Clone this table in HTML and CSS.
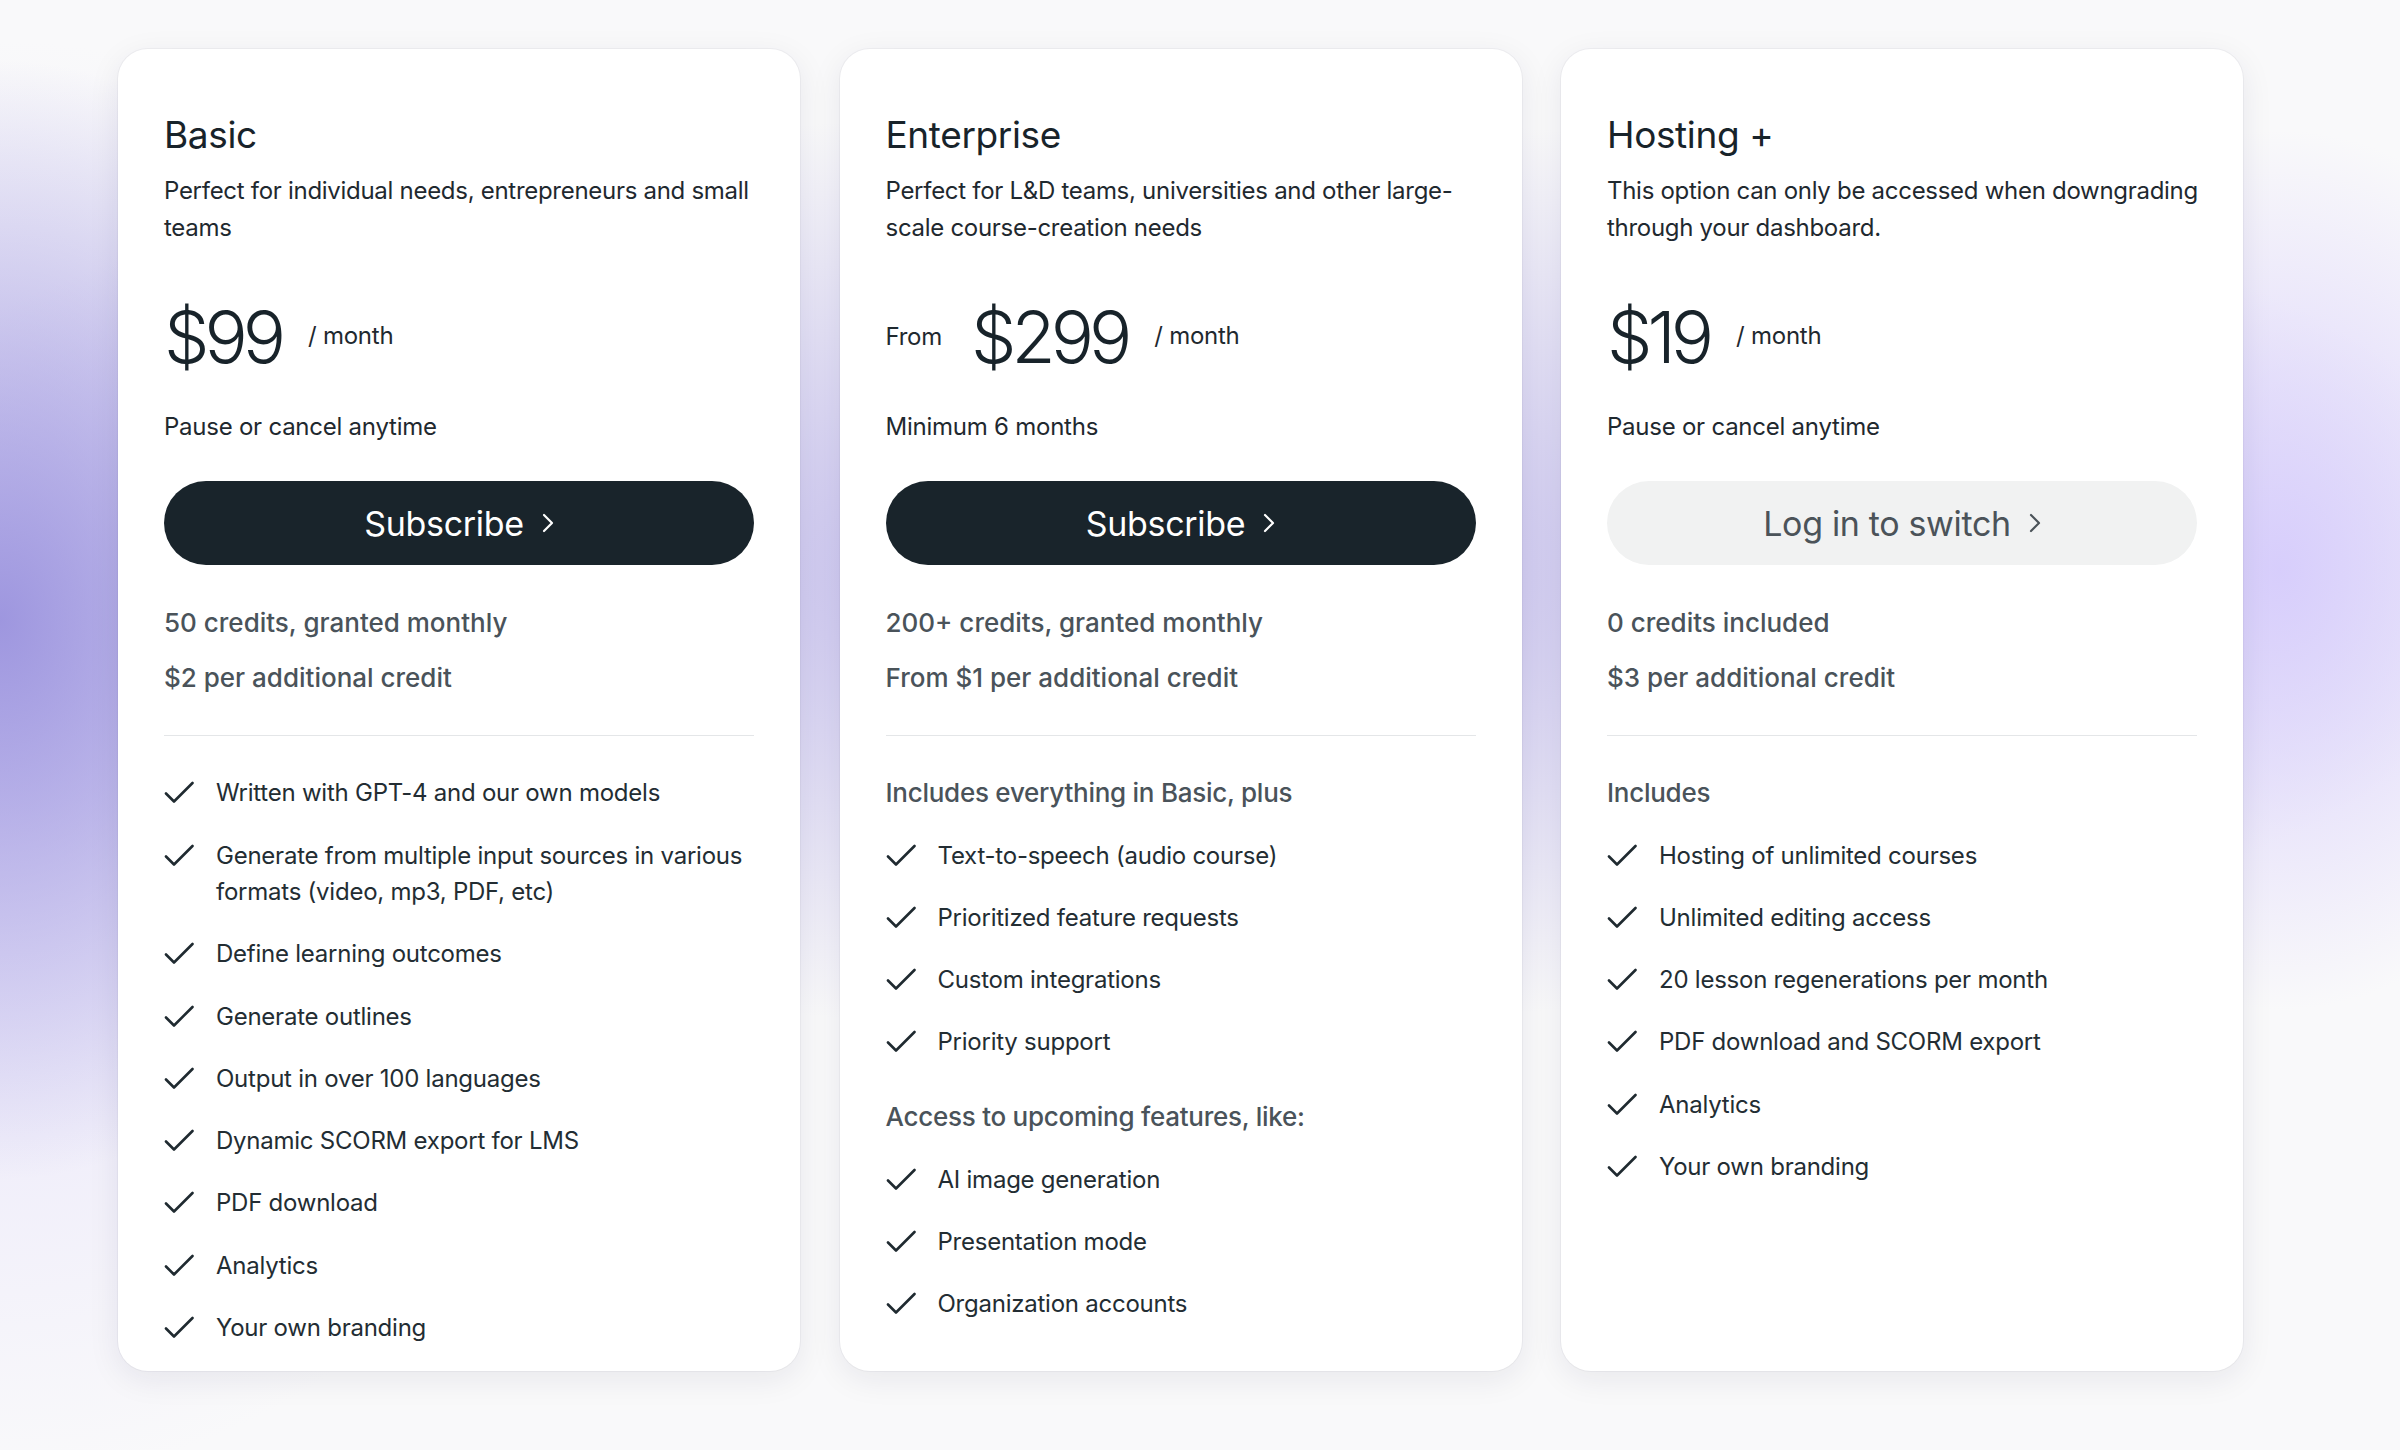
FILE: index.html
```html
<!DOCTYPE html>
<html lang="en">
<head>
<meta charset="utf-8">
<title>Pricing</title>
<link rel="stylesheet" href="styles.css">
</head>
<body>
<main class="plans">
  <section class="card">
    <h2 class="plan-name">Basic</h2>
    <p class="plan-desc">Perfect for individual needs, entrepreneurs and small teams</p>
    <div class="price-row"><span class="price">$99</span><span class="per">/ month</span></div>
    <p class="note">Pause or cancel anytime</p>
    <a class="btn btn-dark" href="#">Subscribe <svg class="chev" viewBox="0 0 12 20" aria-hidden="true"><path d="M2 2l8 8-8 8"/></svg></a>
    <div class="credits"><p>50 credits, granted monthly</p><p>$2 per additional credit</p></div>
    <hr class="divider">
    <ul class="features">
      <li><svg class="check" viewBox="0 0 30 30" aria-hidden="true"><path d="M2 15.5l8 8L28.5 5"/></svg><span>Written with GPT-4 and our own models</span></li>
      <li><svg class="check" viewBox="0 0 30 30" aria-hidden="true"><path d="M2 15.5l8 8L28.5 5"/></svg><span>Generate from multiple input sources in various formats (video, mp3, PDF, etc)</span></li>
      <li><svg class="check" viewBox="0 0 30 30" aria-hidden="true"><path d="M2 15.5l8 8L28.5 5"/></svg><span>Define learning outcomes</span></li>
      <li><svg class="check" viewBox="0 0 30 30" aria-hidden="true"><path d="M2 15.5l8 8L28.5 5"/></svg><span>Generate outlines</span></li>
      <li><svg class="check" viewBox="0 0 30 30" aria-hidden="true"><path d="M2 15.5l8 8L28.5 5"/></svg><span>Output in over 100 languages</span></li>
      <li><svg class="check" viewBox="0 0 30 30" aria-hidden="true"><path d="M2 15.5l8 8L28.5 5"/></svg><span>Dynamic SCORM export for LMS</span></li>
      <li><svg class="check" viewBox="0 0 30 30" aria-hidden="true"><path d="M2 15.5l8 8L28.5 5"/></svg><span>PDF download</span></li>
      <li><svg class="check" viewBox="0 0 30 30" aria-hidden="true"><path d="M2 15.5l8 8L28.5 5"/></svg><span>Analytics</span></li>
      <li><svg class="check" viewBox="0 0 30 30" aria-hidden="true"><path d="M2 15.5l8 8L28.5 5"/></svg><span>Your own branding</span></li>
    </ul>
  </section>

  <section class="card">
    <h2 class="plan-name">Enterprise</h2>
    <p class="plan-desc">Perfect for L&amp;D teams, universities and other large-scale course-creation needs</p>
    <div class="price-row"><span class="from">From</span><span class="price">$299</span><span class="per">/ month</span></div>
    <p class="note">Minimum 6 months</p>
    <a class="btn btn-dark" href="#">Subscribe <svg class="chev" viewBox="0 0 12 20" aria-hidden="true"><path d="M2 2l8 8-8 8"/></svg></a>
    <div class="credits"><p>200+ credits, granted monthly</p><p>From $1 per additional credit</p></div>
    <hr class="divider">
    <p class="group-title">Includes everything in Basic, plus</p>
    <ul class="features">
      <li><svg class="check" viewBox="0 0 30 30" aria-hidden="true"><path d="M2 15.5l8 8L28.5 5"/></svg><span>Text-to-speech (audio course)</span></li>
      <li><svg class="check" viewBox="0 0 30 30" aria-hidden="true"><path d="M2 15.5l8 8L28.5 5"/></svg><span>Prioritized feature requests</span></li>
      <li><svg class="check" viewBox="0 0 30 30" aria-hidden="true"><path d="M2 15.5l8 8L28.5 5"/></svg><span>Custom integrations</span></li>
      <li><svg class="check" viewBox="0 0 30 30" aria-hidden="true"><path d="M2 15.5l8 8L28.5 5"/></svg><span>Priority support</span></li>
    </ul>
    <p class="group-title group-next">Access to upcoming features, like:</p>
    <ul class="features">
      <li><svg class="check" viewBox="0 0 30 30" aria-hidden="true"><path d="M2 15.5l8 8L28.5 5"/></svg><span>AI image generation</span></li>
      <li><svg class="check" viewBox="0 0 30 30" aria-hidden="true"><path d="M2 15.5l8 8L28.5 5"/></svg><span>Presentation mode</span></li>
      <li><svg class="check" viewBox="0 0 30 30" aria-hidden="true"><path d="M2 15.5l8 8L28.5 5"/></svg><span>Organization accounts</span></li>
    </ul>
  </section>

  <section class="card">
    <h2 class="plan-name">Hosting +</h2>
    <p class="plan-desc">This option can only be accessed when downgrading through your dashboard.</p>
    <div class="price-row"><span class="price">$19</span><span class="per">/ month</span></div>
    <p class="note">Pause or cancel anytime</p>
    <a class="btn btn-light" href="#">Log in to switch <svg class="chev" viewBox="0 0 12 20" aria-hidden="true"><path d="M2 2l8 8-8 8"/></svg></a>
    <div class="credits"><p>0 credits included</p><p>$3 per additional credit</p></div>
    <hr class="divider">
    <p class="group-title">Includes</p>
    <ul class="features">
      <li><svg class="check" viewBox="0 0 30 30" aria-hidden="true"><path d="M2 15.5l8 8L28.5 5"/></svg><span>Hosting of unlimited courses</span></li>
      <li><svg class="check" viewBox="0 0 30 30" aria-hidden="true"><path d="M2 15.5l8 8L28.5 5"/></svg><span>Unlimited editing access</span></li>
      <li><svg class="check" viewBox="0 0 30 30" aria-hidden="true"><path d="M2 15.5l8 8L28.5 5"/></svg><span>20 lesson regenerations per month</span></li>
      <li><svg class="check" viewBox="0 0 30 30" aria-hidden="true"><path d="M2 15.5l8 8L28.5 5"/></svg><span>PDF download and SCORM export</span></li>
      <li><svg class="check" viewBox="0 0 30 30" aria-hidden="true"><path d="M2 15.5l8 8L28.5 5"/></svg><span>Analytics</span></li>
      <li><svg class="check" viewBox="0 0 30 30" aria-hidden="true"><path d="M2 15.5l8 8L28.5 5"/></svg><span>Your own branding</span></li>
    </ul>
  </section>
</main>
</body>
</html>
```

FILE: styles.css
```css
html, body {
  margin: 0;
  padding: 0;
}

body {
  min-height: 1450px;
  font-family: Inter, "Noto Sans", "Liberation Sans", sans-serif;
  color: #1c262d;
  background-color: #f9f9fa;
  background-image:
    radial-gradient(ellipse 430px 560px at 0px 620px, rgba(150, 142, 220, 0.9), rgba(150, 142, 220, 0) 100%),
    radial-gradient(ellipse 640px 720px at 0px 760px, rgba(222, 216, 250, 0.7), rgba(222, 216, 250, 0) 100%),
    radial-gradient(ellipse 340px 440px at 2280px 570px, rgba(214, 204, 252, 0.95), rgba(214, 204, 252, 0) 100%),
    radial-gradient(ellipse 1400px 460px at 1150px 570px, rgba(186, 178, 234, 0.85), rgba(186, 178, 234, 0) 100%);
  background-repeat: no-repeat;
}

.plans {
  display: flex;
  align-items: stretch;
  gap: 39.5px;
  padding: 49px 0 0 118px;
}

.card {
  width: 682px;
  box-sizing: border-box;
  padding: 64px 46px 25px;
  background: #ffffff;
  border-radius: 30px;
  box-shadow: 0 0 0 1px rgba(20, 20, 50, 0.04), 0 8px 32px rgba(30, 30, 70, 0.08);
  display: flex;
  flex-direction: column;
}

.plan-name {
  margin: 0;
  font-size: 37px;
  line-height: 44px;
  font-weight: 400;
  letter-spacing: -0.01em;
  color: #18232a;
}

.plan-desc {
  margin: 16px -14px 0 0;
  font-size: 24px;
  line-height: 36.7px;
  letter-spacing: -0.012em;
  color: #1f292f;
}

.price-row {
  margin-top: 55px;
  height: 72px;
  display: flex;
  align-items: center;
  gap: 27px;
}

.price {
  font-size: 72px;
  line-height: 72px;
  font-weight: 300;
  letter-spacing: -0.07em;
  color: #18232a;
}

.from,
.per {
  font-size: 24px;
  line-height: 36px;
  letter-spacing: -0.01em;
  color: #1f292f;
}

.from {
  margin-right: 2px;
}

.per {
  margin-top: -2px;
}

.note {
  margin: 36px 0 0;
  font-size: 24px;
  line-height: 36px;
  letter-spacing: -0.01em;
  color: #1f292f;
}

.btn {
  margin-top: 36px;
  height: 84px;
  border-radius: 42px;
  display: flex;
  align-items: center;
  justify-content: center;
  gap: 18px;
  font-size: 34px;
  letter-spacing: -0.01em;
  text-decoration: none;
}

.btn-dark {
  background: #19242b;
  color: #ffffff;
}

.btn-light {
  background: #f1f2f2;
  color: #4b5359;
}

.chev {
  width: 12px;
  height: 20px;
  fill: none;
  stroke: currentColor;
  stroke-width: 2.2;
  stroke-linecap: round;
  stroke-linejoin: round;
}

.credits {
  margin-top: 40px;
  display: flex;
  flex-direction: column;
  gap: 19px;
}

.credits p {
  margin: 0;
  font-size: 26px;
  line-height: 36px;
  font-weight: 500;
  letter-spacing: 0;
  color: #4a535a;
}

.divider {
  margin: 39px 0 0;
  border: 0;
  height: 1px;
  background: #e4e6e8;
}

.group-title {
  margin: 39px 0 25.75px;
  font-size: 26px;
  line-height: 36.5px;
  font-weight: 500;
  letter-spacing: -0.01em;
  color: #4a535a;
}

.group-next {
  margin-top: 38.5px;
}

.features {
  list-style: none;
  margin: 0;
  padding: 0;
  display: flex;
  flex-direction: column;
  gap: 25.75px;
}

.divider + .features {
  margin-top: 39px;
}

.features li {
  display: flex;
  align-items: flex-start;
  gap: 22px;
  font-size: 24px;
  line-height: 36.5px;
  letter-spacing: -0.01em;
  color: #232d33;
}

.check {
  flex: none;
  width: 30px;
  height: 30px;
  margin-top: 3px;
  fill: none;
  stroke: #1f2a30;
  stroke-width: 2.6;
  stroke-linecap: round;
  stroke-linejoin: round;
}
```
